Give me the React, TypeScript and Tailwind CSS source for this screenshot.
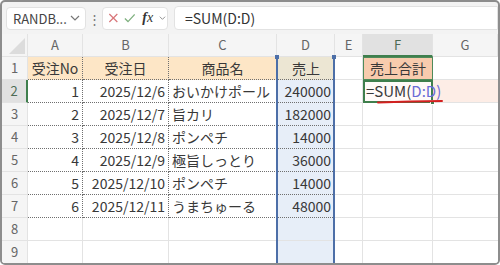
import React from "react";

const FONT = { fontFamily: '"Noto Sans CJK JP", "Noto Sans", sans-serif' };

const rows: [string, string, string, string][] = [
  ["1", "2025/12/6", "おいかけポール", "240000"],
  ["2", "2025/12/7", "旨カリ", "182000"],
  ["3", "2025/12/8", "ポンペチ", "14000"],
  ["4", "2025/12/9", "極旨しっとり", "36000"],
  ["5", "2025/12/10", "ポンペチ", "14000"],
  ["6", "2025/12/11", "うまちゅーる", "48000"],
];

function Chevron({ className = "" }: { className?: string }) {
  return (
    <svg width="10" height="6" viewBox="0 0 10 6" className={className}>
      <path d="M1 1 L5 5 L9 1" fill="none" stroke="#777" strokeWidth="1.2" />
    </svg>
  );
}

const colHeaders = ["A", "B", "C", "D", "E", "F", "G"];

export default function App() {
  const dotted = "border-dotted border-[#6f6f6f]";
  return (
    <div
      className="w-[500px] h-[265px] border-2 border-[#8d8d8d] rounded-[5px] overflow-hidden bg-[#f3f3f3] flex flex-col text-[#383838]"
      style={FONT}
    >
      {/* toolbar */}
      <div className="h-[32px] flex items-center pl-[4px] shrink-0">
        <div className="w-[80px] h-[23px] bg-white border border-[#e2e2e2] rounded-[4px] flex items-center justify-between pl-[6px] pr-[5px]">
          <span className="text-[13px] text-[#444] leading-none">RANDB...</span>
          <Chevron />
        </div>
        <div className="w-[16px] flex justify-center text-[#777] text-[13px] leading-none">⋮</div>
        <div className="w-[66px] h-[23px] bg-white border border-[#e2e2e2] rounded-[4px] flex items-center pl-[5px] gap-[5px]">
          <svg width="12" height="12" viewBox="0 0 12 12">
            <path d="M1.5 1.5 L10.5 10.5 M10.5 1.5 L1.5 10.5" stroke="#d9777b" strokeWidth="1.4" fill="none" />
          </svg>
          <svg width="13" height="12" viewBox="0 0 13 12">
            <path d="M1 6.5 L4.5 10 L12 2" stroke="#7fb07f" strokeWidth="1.4" fill="none" />
          </svg>
          <span
            className="text-[14px] italic leading-none text-[#333] ml-[2px]"
            style={{ fontFamily: '"Liberation Serif", serif' }}
          >
            <b>f</b>x
          </span>
          <Chevron className="scale-75" />
        </div>
        <div className="ml-[6px] flex-1 h-[24px] bg-white border border-[#e2e2e2] rounded-l-[4px] flex items-center pl-[10px]">
          <span className="text-[14px] text-[#333] leading-none">=SUM(D:D)</span>
        </div>
      </div>

      {/* grid */}
      <div className="relative flex-1 bg-white">
        <div className="grid grid-cols-[26px_55px_86px_108px_58px_28px_70px_1fr] auto-rows-[23px] text-[14px]">
          {/* header row */}
          <div className="bg-[#f5f5f5] border-b border-r border-[#e3e3e3] relative">
            <svg width="18" height="18" viewBox="0 0 18 18" className="absolute left-[6px] top-[3px]">
              <path d="M17 1 L17 17 L1 17 Z" fill="#dcdcdc" />
            </svg>
          </div>
          {colHeaders.map((c) => (
            <div
              key={c}
              className={
                c === "F"
                  ? "bg-[#e1e1e1] border-b-2 border-b-[#3f7f4d] border-r border-r-[#e3e3e3] flex items-center justify-center text-[13px] text-[#4d6b55]"
                  : "bg-[#f5f5f5] border-b border-r border-[#e3e3e3] flex items-center justify-center text-[13px] text-[#666]"
              }
            >
              {c}
            </div>
          ))}

          {/* row 1 */}
          <div className="bg-[#f5f5f5] border-b border-r border-[#e3e3e3] flex items-center justify-center text-[13px] text-[#666]">1</div>
          <div className={`bg-[#fde6c6] border-b border-r ${dotted} flex items-center justify-center`}>受注No</div>
          <div className={`bg-[#fde6c6] border-b border-r ${dotted} flex items-center justify-center`}>受注日</div>
          <div className={`bg-[#fde6c6] border-b border-r ${dotted} flex items-center justify-center`}>商品名</div>
          <div className={`bg-[#ece6d3] border-b ${dotted} flex items-center justify-center`}>売上</div>
          <div className="border-b border-r border-[#e3e3e3]"></div>
          <div className="bg-[#f8cbad] border border-[#4f8a5a] flex items-center justify-center">売上合計</div>
          <div className="border-b border-[#e3e3e3]"></div>

          {/* row 2..7 */}
          {rows.map((r, i) => {
            const rn = i + 2;
            const active = rn === 2;
            return (
              <React.Fragment key={rn}>
                <div
                  className={
                    active
                      ? "bg-[#e1e1e1] border-b border-b-[#e3e3e3] border-r-2 border-r-[#3f7f4d] flex items-center justify-center text-[13px] text-[#4d6b55]"
                      : "bg-[#f5f5f5] border-b border-r border-[#e3e3e3] flex items-center justify-center text-[13px] text-[#666]"
                  }
                >
                  {rn}
                </div>
                <div className={`border-b border-r ${dotted} flex items-center justify-end pr-[3px]`}>{r[0]}</div>
                <div className={`border-b border-r ${dotted} flex items-center justify-end pr-[3px]`}>{r[1]}</div>
                <div className={`border-b ${dotted} flex items-center pl-[3px] whitespace-nowrap overflow-hidden`}>{r[2]}</div>
                <div className={`bg-[#e7eef8] border-b ${dotted} flex items-center justify-end pr-[4px]`}>{r[3]}</div>
                <div className="border-b border-r border-[#e3e3e3]"></div>
                {active ? (
                  <div className="relative border-2 border-[#3f7f4d] bg-[#fffaf8] flex items-center pl-[1px] whitespace-nowrap overflow-visible z-10">
                    <span className="text-[15px]">
                      =SUM(<span className="text-[#6b6bd6]">D:D</span>
                      <span className="text-[#6b6bd6]">)</span>
                    </span>
                    <div className="absolute right-[-4px] bottom-[-4px] w-[5px] h-[5px] bg-[#3f7f4d] border border-white"></div>
                  </div>
                ) : (
                  <div className="border-b border-r border-[#e3e3e3]"></div>
                )}
                <div className={active ? "bg-[#fdede6] border-b border-[#e3e3e3]" : "border-b border-[#e3e3e3]"}></div>
              </React.Fragment>
            );
          })}

          {/* rows 8, 9 */}
          {[8, 9].map((rn) => (
            <React.Fragment key={rn}>
              <div className="bg-[#f5f5f5] border-b border-r border-[#e3e3e3] flex items-center justify-center text-[13px] text-[#666]">{rn}</div>
              <div className="border-b border-r border-[#e3e3e3]"></div>
              <div className="border-b border-r border-[#e3e3e3]"></div>
              <div className="border-b border-[#e3e3e3]"></div>
              <div className="bg-[#e7eef8] border-b border-[#e3e3e3]"></div>
              <div className="border-b border-r border-[#e3e3e3]"></div>
              <div className="border-b border-r border-[#e3e3e3]"></div>
              <div className="border-b border-[#e3e3e3]"></div>
            </React.Fragment>
          ))}
        </div>

        {/* column D range highlight */}
        <div className="absolute left-[274px] top-[23px] w-[59px] h-[220px] border-x-2 border-[#4d6fa8] pointer-events-none"></div>
        <div className="absolute left-[273px] top-[21px] w-[4px] h-[4px] bg-[#4d6fa8]"></div>
        <div className="absolute left-[330px] top-[21px] w-[4px] h-[4px] bg-[#4d6fa8]"></div>

        {/* red underline */}
        <svg className="absolute left-[374px] top-[65px] z-20" width="70" height="6" viewBox="0 0 70 6">
          <path d="M2 3.5 Q 35 2.2 66 2" stroke="#d42020" strokeWidth="2" fill="none" strokeLinecap="round" />
        </svg>
      </div>
    </div>
  );
}
